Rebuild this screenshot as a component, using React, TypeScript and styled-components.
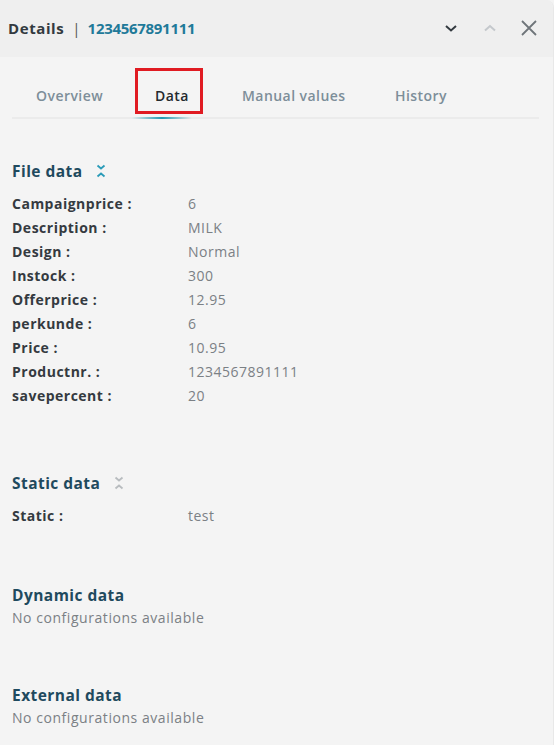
import React from "react";
import styled, { createGlobalStyle } from "styled-components";

const Global = createGlobalStyle`
  html, body { margin: 0; padding: 0; background: #f4f4f4; }
  body { font-family: "Open Sans", "Noto Sans", sans-serif; }
  * { box-sizing: border-box; }
`;

const Panel = styled.div`
  width: 554px;
  min-height: 745px;
  background: #f4f4f4;
  border-right: 1px solid #e8e8e8;
  border-top-right-radius: 8px;
  overflow: hidden;
`;

const Header = styled.div`
  height: 57px;
  background: #efefef;
  display: flex;
  align-items: center;
  padding: 0 12px 2px 8px;
`;

const Title = styled.div`
  flex: 1;
  display: flex;
  align-items: center;
  font-size: 15px;
  font-weight: 700;
  color: #333a40;
`;

const Word = styled.span`
  letter-spacing: 0.6px;
`;

const Sep = styled.span`
  margin: 0 7px 0 8px;
  font-weight: 400;
  color: #555;
`;

const Ref = styled.span`
  color: #1f7a99;
  letter-spacing: -0.3px;
`;

const IconBtn = styled.button<{ $muted?: boolean }>`
  width: 24px;
  height: 24px;
  border: 0;
  background: none;
  padding: 0;
  display: flex;
  align-items: center;
  justify-content: center;
  color: ${(p) => (p.$muted ? "#c4c8cc" : "#333a40")};
`;

const Icons = styled.div`
  display: flex;
  align-items: center;
  gap: 15px;
`;

const Body = styled.div`
  padding: 0 14px 0 12px;
`;

const Tabs = styled.div`
  display: flex;
  align-items: flex-end;
  height: 62px;
  border-bottom: 2px solid #ebebeb;
  padding-left: 24px;
`;

const Tab = styled.div<{ $active?: boolean; $w: number; $gap: number }>`
  position: relative;
  width: ${(p) => p.$w}px;
  padding: 0 0 12px;
  font-size: 14px;
  font-weight: 600;
  letter-spacing: 0.45px;
  white-space: nowrap;
  color: ${(p) => (p.$active ? "#23292e" : "#7d8e99")};
  margin-right: ${(p) => p.$gap}px;
`;

const Highlight = styled.span`
  position: absolute;
  left: -20px;
  top: -18px;
  width: 68px;
  height: 46px;
  border: 3px solid #e01b22;
`;

const Indicator = styled.span`
  position: absolute;
  left: -23px;
  right: -2px;
  bottom: -2px;
  height: 2px;
  background: linear-gradient(90deg, rgba(31,150,175,0) 0%, #1f9ab3 50%, rgba(31,150,175,0) 100%);
`;

const Section = styled.section<{ $top: number }>`
  margin-top: ${(p) => p.$top}px;
`;

const SectionHead = styled.div`
  display: flex;
  align-items: center;
  height: 24px;
  gap: 14px;
`;

const SectionTitle = styled.h3`
  margin: 0;
  font-size: 15.5px;
  font-weight: 700;
  letter-spacing: 0.45px;
  color: #1f4a5e;
`;

const Toggle = styled.span<{ $color: string }>`
  display: flex;
  color: ${(p) => p.$color};
`;

const Rows = styled.div`
  margin-top: 8px;
  display: flex;
  flex-direction: column;
`;

const Row = styled.div`
  display: grid;
  grid-template-columns: 176px 1fr;
  height: 24px;
  align-items: center;
`;

const Label = styled.div`
  font-size: 14px;
  font-weight: 700;
  letter-spacing: 0.5px;
  color: #343a40;
`;

const Value = styled.div`
  font-size: 14px;
  letter-spacing: 0.5px;
  color: #7b8085;
`;

const Empty = styled.div`
  font-size: 14px;
  letter-spacing: 0.55px;
  color: #7b8085;
  margin-top: 1px;
`;

const Collapse = () => (
  <svg width="10" height="14" viewBox="0 0 10 14" fill="none" stroke="currentColor" strokeWidth="1.8">
    <path d="M1.5 1.5 L5 4.5 L8.5 1.5" />
    <path d="M1.5 12.5 L5 9.5 L8.5 12.5" />
  </svg>
);

const fileData: [string, string][] = [
  ["Campaignprice :", "6"],
  ["Description :", "MILK"],
  ["Design :", "Normal"],
  ["Instock :", "300"],
  ["Offerprice :", "12.95"],
  ["perkunde :", "6"],
  ["Price :", "10.95"],
  ["Productnr. :", "1234567891111"],
  ["savepercent :", "20"],
];

export default function App() {
  return (
    <>
      <Global />
      <Panel>
        <Header>
          <Title>
            <Word>Details</Word>
            <Sep>|</Sep>
            <Ref>1234567891111</Ref>
          </Title>
          <Icons>
            <IconBtn aria-label="next">
              <svg width="14" height="10" viewBox="0 0 14 10" fill="none" stroke="currentColor" strokeWidth="2">
                <path d="M2 3 L7 7.5 L12 3" />
              </svg>
            </IconBtn>
            <IconBtn $muted aria-label="previous">
              <svg width="14" height="10" viewBox="0 0 14 10" fill="none" stroke="currentColor" strokeWidth="2">
                <path d="M2 7.5 L7 3 L12 7.5" />
              </svg>
            </IconBtn>
            <IconBtn aria-label="close">
              <svg width="18" height="18" viewBox="0 0 18 18" fill="none" stroke="#6f757a" strokeWidth="1.8">
                <path d="M2 2 L16 16 M16 2 L2 16" />
              </svg>
            </IconBtn>
          </Icons>
        </Header>
        <Body>
          <Tabs>
            <Tab $w={67} $gap={52}>Overview</Tab>
            <Tab $active $w={35} $gap={52}>
              Data
              <Highlight />
              <Indicator />
            </Tab>
            <Tab $w={105} $gap={48}>Manual values</Tab>
            <Tab $w={51} $gap={0}>History</Tab>
          </Tabs>

          <Section $top={40}>
            <SectionHead>
              <SectionTitle>File data</SectionTitle>
              <Toggle $color="#2a9bb8"><Collapse /></Toggle>
            </SectionHead>
            <Rows>
              {fileData.map(([l, v]) => (
                <Row key={l}>
                  <Label>{l}</Label>
                  <Value>{v}</Value>
                </Row>
              ))}
            </Rows>
          </Section>

          <Section $top={64}>
            <SectionHead>
              <SectionTitle>Static data</SectionTitle>
              <Toggle $color="#b8bcbf"><Collapse /></Toggle>
            </SectionHead>
            <Rows>
              <Row>
                <Label>Static :</Label>
                <Value>test</Value>
              </Row>
            </Rows>
          </Section>

          <Section $top={56}>
            <SectionHead>
              <SectionTitle>Dynamic data</SectionTitle>
            </SectionHead>
            <Empty>No configurations available</Empty>
          </Section>

          <Section $top={56}>
            <SectionHead>
              <SectionTitle>External data</SectionTitle>
            </SectionHead>
            <Empty>No configurations available</Empty>
          </Section>
        </Body>
      </Panel>
    </>
  );
}
